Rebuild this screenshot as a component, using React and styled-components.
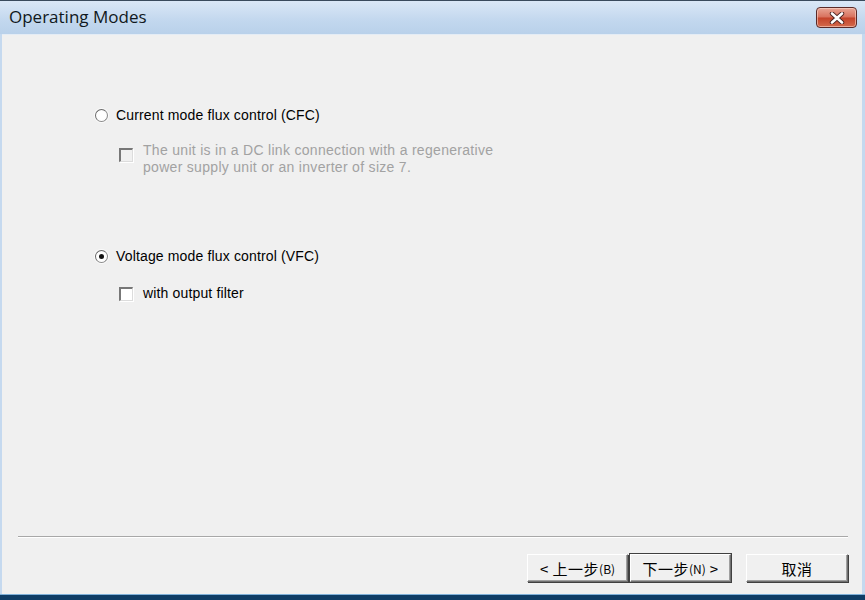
import React from "react";
import styled, { createGlobalStyle } from "styled-components";

const Global = createGlobalStyle`
  html, body { margin: 0; padding: 0; background: #1b4f7a; }
  * { box-sizing: border-box; }
`;

const Window = styled.div`
  width: 865px;
  height: 600px;
  display: flex;
  flex-direction: column;
  background: #c5d9ef;
  border-top: 1px solid #3a4a5c;
  overflow: hidden;
`;

const TitleBar = styled.div`
  height: 33px;
  flex: none;
  display: flex;
  align-items: center;
  justify-content: space-between;
  padding: 0 8px 2px 9px;
  background: linear-gradient(#dae7f6, #c2d7ee 60%, #b9d1ea);
`;

const Title = styled.div`
  font-family: "Open Sans", "Noto Sans", sans-serif;
  font-size: 17px;
  color: #101820;
  letter-spacing: 0;
`;

const CloseBtn = styled.div`
  width: 41px;
  height: 21px;
  margin-top: 2px;
  border: 1px solid #5a2a28;
  border-radius: 4px;
  background: linear-gradient(#e8a594, #d8715d 48%, #c4432a 52%, #d36a4c);
  box-shadow: inset 0 0 0 1px rgba(255, 220, 210, 0.55);
  display: flex;
  align-items: center;
  justify-content: center;
`;

const Body = styled.div`
  flex: 1;
  margin: 0 3px 0 2px;
  background: #f0f0f0;
  border-top: 1px solid #e4ecf5;
  display: flex;
  flex-direction: column;
  font-family: "Liberation Sans", Arial, sans-serif;
  font-size: 14px;
  color: #000;
`;

const Options = styled.div`
  flex: 1;
  padding: 72px 0 0 91px;
  display: flex;
  flex-direction: column;
`;

const Row = styled.div`
  display: flex;
  align-items: ${(p) => (p.$top ? "flex-start" : "center")};
  gap: ${(p) => p.$gap || 10}px;
  margin-left: ${(p) => p.$indent || 0}px;
  margin-top: ${(p) => p.$mt || 0}px;
`;

const Radio = styled.div`
  width: 13px;
  height: 13px;
  border-radius: 50%;
  border: 1px solid #8a8a8a;
  border-left-color: #6b6b6b;
  border-top-color: #6b6b6b;
  background: radial-gradient(circle, #ffffff 50%, #f2f2f2 100%);
  box-shadow: 0 0 0 1px #fafafa;
  display: flex;
  align-items: center;
  justify-content: center;
  flex: none;
  margin-left: 2px;
`;

const Dot = styled.div`
  width: 5px;
  height: 5px;
  border-radius: 50%;
  background: #111;
`;

const Check = styled.div`
  width: 14px;
  height: 14px;
  flex: none;
  background: ${(p) => (p.$disabled ? "#f0f0f0" : "#fff")};
  border-top: 2px solid #777;
  border-left: 2px solid #777;
  border-right: 1px solid #dcdcdc;
  border-bottom: 1px solid #dcdcdc;
  box-shadow: 1px 1px 0 #fff;
  margin-top: ${(p) => p.$mt || 0}px;
`;

const Label = styled.div`
  color: ${(p) => (p.$disabled ? "#a2a2a2" : "#000")};
  line-height: 17px;
  letter-spacing: ${(p) => (p.$disabled ? "0.3px" : "0.15px")};
`;

const Footer = styled.div`
  flex: none;
  padding: 0 14px 12px 16px;
  display: flex;
  flex-direction: column;
`;

const Separator = styled.div`
  height: 2px;
  border-top: 1px solid #a8a8a8;
  border-bottom: 1px solid #ffffff;
`;

const Buttons = styled.div`
  display: flex;
  justify-content: flex-end;
  margin-top: 16px;
`;

const Button = styled.div`
  width: ${(p) => p.$w || 101}px;
  height: 28px;
  margin-left: ${(p) => p.$ml || 0}px;
  display: flex;
  align-items: center;
  justify-content: center;
  font-family: "Noto Sans CJK SC", "Liberation Sans", sans-serif;
  font-size: 15px;
  color: #000;
  background: #f0f0f0;
  border-top: 1px solid #ffffff;
  border-left: 1px solid #ffffff;
  border-right: 1px solid #707070;
  border-bottom: 1px solid #707070;
  box-shadow: ${(p) =>
    p.$default
      ? "0 0 0 1px #404040, inset -1px -1px 0 #a0a0a0"
      : "inset -1px -1px 0 #a0a0a0, 1px 1px 0 #404040"};
  letter-spacing: 0.5px;
  white-space: pre;
`;

const Small = styled.span`
  font-size: 12px;
  letter-spacing: 0;
`;

const Taskbar = styled.div`
  height: 6px;
  flex: none;
  background: linear-gradient(#7fb0d8 0 1px, #0f3d66 1px);
`;

export default function App() {
  return (
    <>
      <Global />
      <Window>
        <TitleBar>
          <Title>Operating Modes</Title>
          <CloseBtn>
            <svg width="16" height="12" viewBox="0 0 16 12">
              <path
                d="M3 1.5 L13 10.5 M13 1.5 L3 10.5"
                stroke="#4a2320"
                strokeWidth="4.4"
                strokeLinecap="round"
              />
              <path
                d="M3 1.5 L13 10.5 M13 1.5 L3 10.5"
                stroke="#ffffff"
                strokeWidth="2.6"
                strokeLinecap="round"
              />
            </svg>
          </CloseBtn>
        </TitleBar>
        <Body>
          <Options>
            <Row $gap={8}>
              <Radio />
              <Label>Current mode flux control (CFC)</Label>
            </Row>
            <Row $top $indent={26} $mt={18}>
              <Check $disabled $mt={6} />
              <Label $disabled>
                The unit is in a DC link connection with a regenerative
                <br />
                power supply unit or an inverter of size 7.
              </Label>
            </Row>
            <Row $gap={8} $mt={72}>
              <Radio>
                <Dot />
              </Radio>
              <Label>Voltage mode flux control (VFC)</Label>
            </Row>
            <Row $indent={26} $mt={20}>
              <Check />
              <Label>with output filter</Label>
            </Row>
          </Options>
          <Footer>
            <Separator />
            <Buttons>
              <Button>
                {"< 上一步"}
                <Small>(B)</Small>
              </Button>
              <Button $default $ml={2}>
                {"下一步"}
                <Small>(N)</Small>
                {" >"}
              </Button>
              <Button $ml={15} $w={102}>
                取消
              </Button>
            </Buttons>
          </Footer>
        </Body>
        <Taskbar />
      </Window>
    </>
  );
}
